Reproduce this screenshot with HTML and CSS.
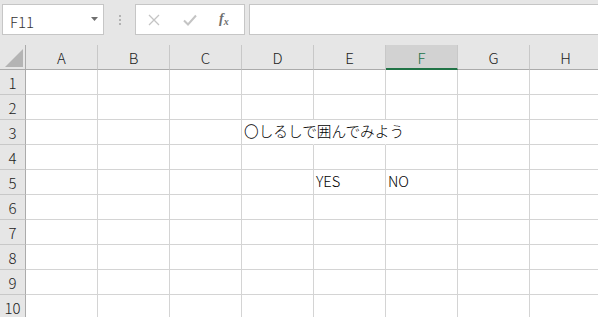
FILE: index.html
```html
<!DOCTYPE html>
<html lang="ja">
<head>
<meta charset="utf-8">
<link rel="stylesheet" href="styles.css">
</head>
<body>
<div class="app">
  <div class="toolbar">
    <div class="namebox">
      <span class="name">F11</span>
      <svg class="caret" width="7" height="4" viewBox="0 0 7 4"><path d="M0 0H7L3.5 4Z" fill="#6f6f6f"/></svg>
    </div>
    <div class="grip"><i></i><i></i><i></i></div>
    <div class="fbuttons">
      <svg class="ic" width="12" height="12" viewBox="0 0 12 12"><path d="M1 1L11 11M11 1L1 11" stroke="#c4c4c4" stroke-width="1.3" fill="none"/></svg>
      <svg class="ic" width="14" height="12" viewBox="0 0 14 12"><path d="M1 6.5L5 10.5L13 1.5" stroke="#c4c4c4" stroke-width="2" fill="none"/></svg>
      <span class="fx">f<span class="fxx">x</span></span>
    </div>
    <div class="finput"></div>
  </div>
  <div class="sheet">
    <div class="corner"><svg width="18" height="18" viewBox="0 0 18 18"><path d="M18 0V18H0Z" fill="#b4b4b4"/></svg></div>
    <div class="ch">A</div><div class="ch">B</div><div class="ch">C</div><div class="ch">D</div><div class="ch">E</div><div class="ch sel">F</div><div class="ch">G</div><div class="ch">H</div>

    <div class="rh">1</div><div class="c"></div><div class="c"></div><div class="c"></div><div class="c"></div><div class="c"></div><div class="c"></div><div class="c"></div><div class="c"></div>
    <div class="rh">2</div><div class="c"></div><div class="c"></div><div class="c"></div><div class="c"></div><div class="c"></div><div class="c"></div><div class="c"></div><div class="c"></div>
    <div class="rh">3</div><div class="c"></div><div class="c"></div><div class="c"></div><div class="c over"><span class="jp">〇しるしで囲んでみよう</span></div><div class="c nb"></div><div class="c"></div><div class="c"></div><div class="c"></div>
    <div class="rh">4</div><div class="c"></div><div class="c"></div><div class="c"></div><div class="c"></div><div class="c"></div><div class="c"></div><div class="c"></div><div class="c"></div>
    <div class="rh">5</div><div class="c"></div><div class="c"></div><div class="c"></div><div class="c"></div><div class="c"><span class="t">YES</span></div><div class="c"><span class="t">NO</span></div><div class="c"></div><div class="c"></div>
    <div class="rh">6</div><div class="c"></div><div class="c"></div><div class="c"></div><div class="c"></div><div class="c"></div><div class="c"></div><div class="c"></div><div class="c"></div>
    <div class="rh">7</div><div class="c"></div><div class="c"></div><div class="c"></div><div class="c"></div><div class="c"></div><div class="c"></div><div class="c"></div><div class="c"></div>
    <div class="rh">8</div><div class="c"></div><div class="c"></div><div class="c"></div><div class="c"></div><div class="c"></div><div class="c"></div><div class="c"></div><div class="c"></div>
    <div class="rh">9</div><div class="c"></div><div class="c"></div><div class="c"></div><div class="c"></div><div class="c"></div><div class="c"></div><div class="c"></div><div class="c"></div>
    <div class="rh">10</div><div class="c"></div><div class="c"></div><div class="c"></div><div class="c"></div><div class="c"></div><div class="c"></div><div class="c"></div><div class="c"></div>
  </div>
</div>
</body>
</html>
```

FILE: styles.css
```css
html, body {
  margin: 0;
  padding: 0;
  background: #ffffff;
  overflow: hidden;
}
.app {
  width: 598px;
  height: 317px;
  overflow: hidden;
  font-family: "Liberation Sans", "Noto Sans CJK JP", sans-serif;
  color: #000;
}
.toolbar {
  display: flex;
  align-items: flex-start;
  height: 45px;
  box-sizing: border-box;
  padding: 4px 0 0 2px;
  background: #e6e6e6;
}
.namebox {
  width: 102px;
  height: 31px;
  box-sizing: border-box;
  background: #fff;
  border: 1px solid #c6c6c6;
  display: flex;
  align-items: center;
  justify-content: space-between;
  padding: 0 5px 0 7px;
}
.name {
  font-family: "Noto Sans CJK JP", sans-serif;
  font-size: 15px;
  font-weight: 300;
  color: #333;
  margin-top: 3px;
}
.caret { margin-top: -1px; }
.grip {
  width: 31px;
  height: 31px;
  display: flex;
  flex-direction: column;
  align-items: center;
  justify-content: center;
  gap: 2px;
}
.grip i {
  display: block;
  width: 2px;
  height: 2px;
  background: #b3b3b3;
}
.fbuttons {
  width: 110px;
  height: 31px;
  box-sizing: border-box;
  background: #fff;
  border: 1px solid #c6c6c6;
  display: flex;
  align-items: center;
  padding: 0 0 0 12px;
}
.fbuttons .ic:first-child { margin-right: 23px; }
.fbuttons .ic:nth-child(2) { margin-right: 22px; }
.fx {
  font-family: "Liberation Serif", serif;
  font-style: italic;
  font-size: 14px;
  color: #6e6e6e;
  font-weight: bold;
  line-height: 1;
  margin-top: -2px;
  display: flex;
  align-items: flex-end;
}
.fxx {
  font-size: 10px;
  position: relative;
  top: 1px;
}
.finput {
  margin-left: 4px;
  flex: 1;
  height: 31px;
  box-sizing: border-box;
  background: #fff;
  border: 1px solid #c6c6c6;
  border-right: none;
}
.sheet {
  display: grid;
  grid-template-columns: 26px repeat(8, 72px);
  grid-template-rows: 25px repeat(10, 25px);
  width: 628px;
  font-family: "Noto Sans CJK JP", sans-serif;
  font-weight: 300;
}
.corner {
  background: #e6e6e6;
  border-right: 1px solid #ababab;
  border-bottom: 1px solid #ababab;
  display: flex;
  align-items: flex-end;
  justify-content: flex-end;
  padding: 0 2px 2px 0;
}
.corner svg { display: block; }
.ch {
  background: #e6e6e6;
  border-right: 1px solid #c8c8c8;
  border-bottom: 1px solid #ababab;
  display: flex;
  align-items: center;
  justify-content: center;
  font-size: 15px;
  color: #222;
  line-height: 1;
  padding-top: 1px;
}
.ch.sel {
  background: #d2d2d2;
  color: #217346;
  border-bottom: 2px solid #217346;
  padding-top: 2px;
}
.rh {
  background: #e6e6e6;
  border-right: 1px solid #ababab;
  border-bottom: 1px solid #c8c8c8;
  display: flex;
  align-items: center;
  justify-content: center;
  font-size: 15px;
  line-height: 1;
  color: #222;
  padding-top: 1px;
}
.c {
  border-right: 1px solid #d4d4d4;
  border-bottom: 1px solid #d4d4d4;
  display: flex;
  align-items: flex-end;
  padding: 0 0 5px 2px;
  font-size: 14.67px;
  line-height: 1;
  white-space: nowrap;
}
.c.over, .c.nb {
  border-right-color: transparent;
}
.c.over {
  position: relative;
  z-index: 1;
}
.jp {
  font-size: 14.67px;
  line-height: 1;
}
.t {
  font-size: 14.67px;
}
```
